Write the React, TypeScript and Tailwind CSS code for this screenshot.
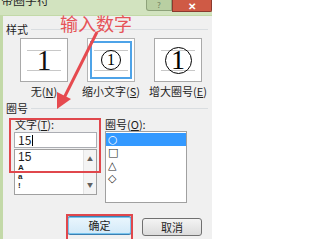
import React from 'react';

const cjk = "font-['Noto_Sans_CJK_SC','Microsoft_YaHei',sans-serif]";

function GroupHeader({ label, className }: { label: string; className: string }) {
  return (
    <div className={`flex items-center gap-[3px] pl-[3px] pr-[4px] ${className}`}>
      <span className="text-[11px] leading-none text-[#1e1e1e]">{label}</span>
      <div className="h-px flex-1 bg-[#d9dde0]" />
    </div>
  );
}

function GuideLines() {
  return (
    <>
      <div className="absolute left-[6px] right-[6px] top-[11px] h-px bg-[#c8c8c8]" />
      <div className="absolute left-[6px] right-[6px] top-[31px] h-px bg-[#c8c8c8]" />
    </>
  );
}

export default function App() {
  return (
    <div className={`relative flex h-[239px] w-[212px] flex-col overflow-hidden bg-[#c3d9a8] ${cjk}`}>
      {/* title bar */}
      <div className="flex h-[15px] items-start bg-[#d2e3bf]">
        <span className="mt-[-7px] pl-[1px] text-[12px] leading-[14px] text-[#2a2a2a]">带圈字符</span>
        <div className="ml-auto flex h-[11px] w-[26px] items-center justify-center rounded-bl-[3px] border border-t-0 border-[#8ea27a] bg-[#b9cfa2] text-[8px] leading-none text-[#6f7f60]">
          ?
        </div>
        <div className="flex h-[12px] w-[40px] items-center justify-center rounded-br-[2px] border border-t-0 border-[#8b3a2e] bg-[#cf5a45] text-[10px] font-bold leading-none text-white">
          ✕
        </div>
      </div>

      {/* dialog body */}
      <div className="ml-[3px] mt-[1px] flex flex-1 flex-col bg-[#f0f0f0]">
        <GroupHeader label="样式" className="mt-[6px] h-[14px]" />

        {/* style previews */}
        <div className="mt-[2px] flex gap-[19px] pl-[17px]">
          <div className="relative flex h-[44px] w-[48px] items-center justify-center border border-[#a9a9a9] bg-white">
            <GuideLines />
            <span className="relative font-['Liberation_Serif',serif] text-[29px] font-light leading-none text-[#111]">1</span>
          </div>
          <div className="relative flex h-[44px] w-[48px] items-center justify-center border border-[#b4b4b4] bg-white">
            <div className="absolute inset-[2px] border-2 border-[#4ea3e8]" />
            <GuideLines />
            <div className="relative flex h-[20px] w-[20px] items-center justify-center rounded-full border-[1.5px] border-black bg-white">
              <span className="font-['Liberation_Serif',serif] text-[16px] leading-none text-black">1</span>
            </div>
          </div>
          <div className="relative flex h-[44px] w-[48px] items-center justify-center border border-[#a9a9a9] bg-white">
            <GuideLines />
            <div className="relative flex h-[27px] w-[27px] items-center justify-center rounded-full border border-black">
              <span className="font-['Liberation_Serif',serif] text-[28px] leading-none text-black">1</span>
            </div>
          </div>
        </div>

        {/* style labels */}
        <div className="mt-[3px] flex h-[12px] gap-[19px] pl-[17px] text-[11px] leading-[12px] text-[#1e1e1e]">
          <div className="flex w-[48px] justify-center whitespace-nowrap">
            无(<span className="underline">N</span>)
          </div>
          <div className="flex w-[48px] justify-center whitespace-nowrap">
            缩小文字(<span className="underline">S</span>)
          </div>
          <div className="flex w-[48px] justify-center whitespace-nowrap">
            增大圈号(<span className="underline">E</span>)
          </div>
        </div>

        <GroupHeader label="圈号" className="mt-[5px] h-[12px]" />

        {/* text / enclosure lists */}
        <div className="mt-[5px] flex pl-[11px] text-[11px] leading-none text-[#1e1e1e]">
          <div className="flex w-[83px] flex-col">
            <div className="h-[13px] pl-[1px]">
              文字(<span className="underline">T</span>):
            </div>
            <div className="flex h-[16px] items-center border border-[#abadb3] bg-white pl-[3px] text-[12px]">
              15<span className="ml-px h-[11px] w-px bg-black" />
            </div>
            <div className="mt-[1px] flex h-[46px] border border-[#a0a0a0] bg-white">
              <div className="flex flex-1 flex-col pl-[3px] pt-[1px] font-['Liberation_Sans',sans-serif]">
                <div className="h-[12px] text-[12px] leading-[12px]">15</div>
                <div className="h-[9px] text-[8px] font-bold leading-[9px]">A</div>
                <div className="h-[9px] text-[8px] font-bold leading-[9px]">a</div>
                <div className="h-[9px] text-[8px] font-bold leading-[9px]">!</div>
              </div>
              <div className="flex w-[13px] flex-col items-center justify-between border-l border-[#e3e3e3] bg-[#f4f4f4] py-[6px] text-[6px] leading-none text-[#606060]">
                <span>▲</span>
                <span>▼</span>
              </div>
            </div>
          </div>

          <div className="ml-[8px] flex w-[82px] flex-col">
            <div className="h-[12px]">
              圈号(<span className="underline">O</span>):
            </div>
            <div className="flex h-[72px] flex-col border border-[#a0a0a0] bg-white pt-px font-['DejaVu_Sans',sans-serif] text-[11px] leading-[13px]">
              <div className="h-[13px] bg-[#3399ff] pl-[2px] text-white">○</div>
              <div className="h-[13px] pl-[2px]">□</div>
              <div className="h-[13px] pl-[2px]">△</div>
              <div className="h-[13px] pl-[2px]">◇</div>
            </div>
          </div>
        </div>

        {/* buttons */}
        <div className="mt-[13px] flex items-start pl-[64px] text-[11px] leading-none text-[#1e1e1e]">
          <div className="flex h-[19px] w-[65px] items-center justify-center rounded-[3px] border border-[#3c7fb1] bg-gradient-to-b from-[#eaf6fd] to-[#d2e9f8] shadow-[inset_0_0_0_1px_#78c4ee]">
            确定
          </div>
          <div className="ml-[10px] mt-[2px] flex h-[18px] w-[60px] items-center justify-center rounded-[3px] border border-[#707070] bg-gradient-to-b from-[#f4f4f4] to-[#dcdcdc]">
            取消
          </div>
        </div>
      </div>

      {/* red annotations */}
      <div className="absolute left-[60px] top-[14px] text-[18px] leading-none text-[#e65458]">输入数字</div>
      <svg className="absolute left-0 top-0" width="212" height="239" viewBox="0 0 212 239">
        <line x1="97" y1="32" x2="64" y2="98" stroke="#e64a4f" strokeWidth="3" />
        <polygon points="57,109 57,92 71,99" fill="#e64a4f" />
      </svg>
      <div className="absolute left-[9px] top-[118px] h-[55px] w-[92px] border-2 border-[#e0474c]" />
      <div className="absolute left-[66px] top-[214px] h-[30px] w-[67px] border-2 border-[#e0474c]" />
    </div>
  );
}
